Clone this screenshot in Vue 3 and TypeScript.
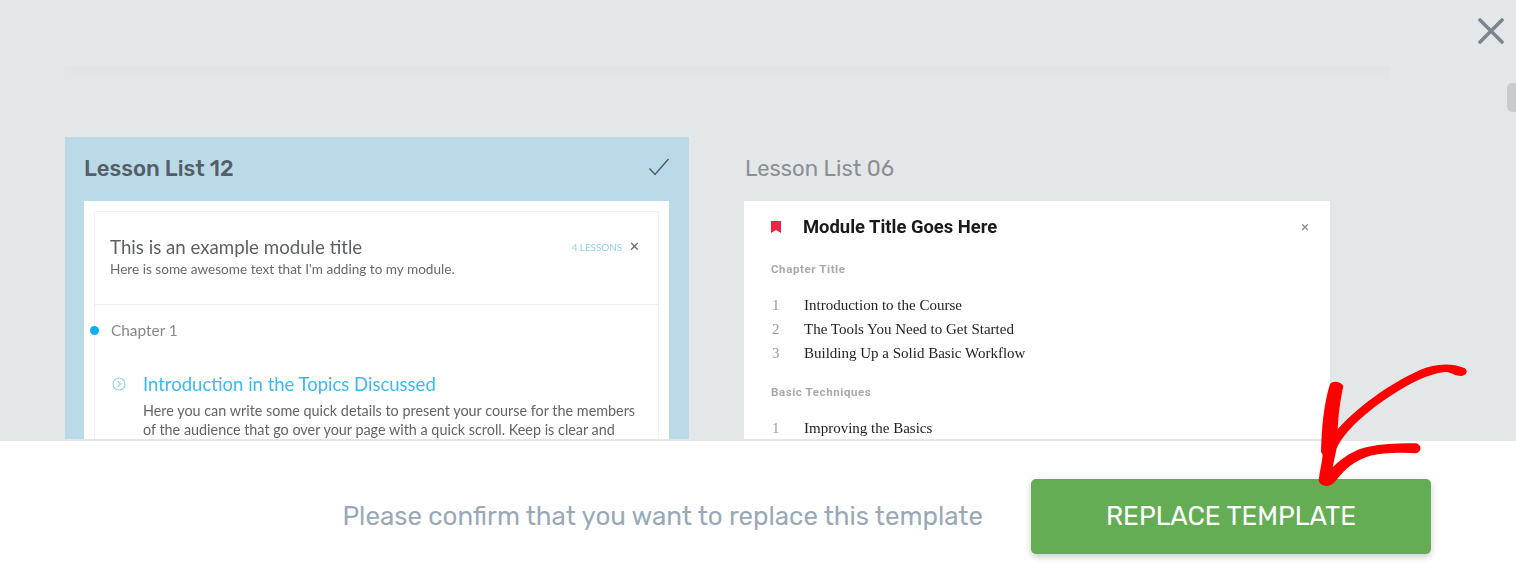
<script setup lang="ts">
const chapters = [
  { title: 'Chapter Title', lessons: ['Introduction to the Course', 'The Tools You Need to Get Started', 'Building Up a Solid Basic Workflow'] },
  { title: 'Basic Techniques', lessons: ['Improving the Basics'] },
]
</script>

<template>
  <div class="page">
    <main class="stage">
      <div class="rule"></div>
      <section class="cards">
        <article class="card selected">
          <header class="card-head">
            <h2 class="card-title strong">Lesson List 12</h2>
            <svg class="check" viewBox="0 0 22 18" width="22" height="18" aria-hidden="true">
              <path d="M1.5 10.5 L7 16.5 L20.5 1" fill="none" stroke="#4f5a63" stroke-width="1.4" />
            </svg>
          </header>
          <div class="preview soft">
            <div class="module">
              <div class="module-head">
                <div>
                  <div class="module-title">This is an example module title</div>
                  <div class="module-sub">Here is some awesome text that I'm adding to my module.</div>
                </div>
                <div class="module-meta">
                  <span class="lessons">4 LESSONS</span>
                  <span class="module-x">✕</span>
                </div>
              </div>
              <div class="chapter"><span class="dot"></span>Chapter 1</div>
              <div class="lesson">
                <svg class="lesson-icon" viewBox="0 0 14 14" width="14" height="14" aria-hidden="true">
                  <circle cx="7" cy="7" r="6" fill="none" stroke="#8fd5f3" stroke-width="1.1" />
                  <path d="M5.6 4 L8.6 7 L5.6 10" fill="none" stroke="#8fd5f3" stroke-width="1.1" />
                </svg>
                <div>
                  <div class="lesson-title">Introduction in the Topics Discussed</div>
                  <p class="lesson-text">Here you can write some quick details to present your course for the members of the audience that go over your page with a quick scroll. Keep is clear and</p>
                </div>
              </div>
            </div>
          </div>
        </article>
        <article class="card">
          <header class="card-head">
            <h2 class="card-title">Lesson List 06</h2>
          </header>
          <div class="preview soft plain">
            <div class="plain-head">
              <svg class="bookmark" viewBox="0 0 10 12" width="10" height="12" aria-hidden="true">
                <path d="M0 0 H10 V12 L5 9 L0 12 Z" fill="#ee2245" />
              </svg>
              <span class="plain-title">Module Title Goes Here</span>
              <span class="plain-x">×</span>
            </div>
            <div v-for="c in chapters" :key="c.title" class="plain-chapter">
              <div class="plain-label">{{ c.title }}</div>
              <ol class="plain-list">
                <li v-for="(l, i) in c.lessons" :key="l"><span class="num">{{ i + 1 }}</span>{{ l }}</li>
              </ol>
            </div>
          </div>
        </article>
      </section>
    </main>
    <footer class="foot">
      <span class="confirm">Please confirm that you want to replace this template</span>
      <button class="replace" type="button">REPLACE TEMPLATE</button>
    </footer>

    <svg class="close" viewBox="0 0 26 26" width="26" height="26" aria-hidden="true">
      <path d="M2 2 L24 24 M24 2 L2 24" stroke="#7d858e" stroke-width="3.6" stroke-linecap="round" />
    </svg>
    <div class="thumb"></div>
    <svg class="arrow" viewBox="0 0 708 705" width="236" height="235" aria-hidden="true">
      <path fill="#ff0000" d="M150 132 C158 122 180 122 190 138 C184 170 176 205 173 268 C230 205 320 135 420 90 C460 72 510 66 553 84 C566 92 560 106 544 108 C525 108 515 98 500 96 C440 98 350 150 270 212 C220 252 185 290 170 325 L158 382 C190 350 225 328 265 320 C310 311 365 309 408 310 C426 314 426 336 408 340 C365 337 305 338 262 350 C225 362 195 385 165 425 C150 442 125 442 116 424 C118 395 126 370 128 345 L123 335 C125 270 130 195 150 132 Z" />
    </svg>
  </div>
</template>

<style>
html, body { margin: 0; background: #fff; }
</style>

<style scoped>
.page {
  position: relative;
  width: 1516px;
  height: 575px;
  overflow: hidden;
  background: #fff;
  font-family: Roboto, "Liberation Sans", sans-serif;
}
.stage {
  height: 439px;
  overflow: hidden;
  box-sizing: border-box;
  padding-top: 67px;
  background: #e3e7e8;
}
.rule {
  height: 16px;
  margin: 0 126px 0 65px;
  background: linear-gradient(#e0e4e5, #e3e7e8);
}
.cards {
  display: grid;
  grid-template-columns: 624px 624px;
  column-gap: 36px;
  margin: 54px 0 0 65px;
}
.card {
  box-sizing: border-box;
  padding: 0 19px;
  height: 400px;
}
.card.selected { background: #badae8; }
.card-head {
  display: flex;
  align-items: center;
  justify-content: space-between;
  height: 64px;
  padding-bottom: 1px;
  box-sizing: border-box;
}
.card-title {
  margin: 0 0 0 1px;
  font-family: Rubik, Roboto, sans-serif;
  font-size: 22.1px;
  font-weight: 400;
  color: #8a8f93;
}
.card-title.strong { margin-left: 0; font-weight: 500; color: #555e67; }
.check { margin-top: -4px; }
.preview {
  width: 586px;
  height: 336px;
  background: #fff;
  box-sizing: border-box;
}
.soft { filter: blur(0.3px); }
.selected .preview { width: 585px; padding: 10px 10px 0 10px; }
.module {
  border: 1.5px solid #eff1f2;
  height: 400px;
  font-family: Lato, sans-serif;
}
.module-head {
  display: flex;
  justify-content: space-between;
  height: 93px;
  box-sizing: border-box;
  padding: 24px 18px 0 15px;
  border-bottom: 1.5px solid #eaeced;
}
.module-title { font-size: 18.7px; line-height: 22px; color: #5c5f62; }
.module-sub { font-size: 13.6px; line-height: 22px; color: #666a6d; }
.module-meta { display: flex; gap: 7px; align-items: flex-start; line-height: 22px; }
.lessons { font-size: 10px; letter-spacing: -0.1px; color: #8cd0ee; }
.module-x { font-size: 13px; color: #666; line-height: 20px; }
.chapter {
  position: relative;
  padding: 14px 0 0 16px;
  font-size: 15.4px;
  line-height: 22px;
  color: #86898c;
}
.dot {
  position: absolute;
  left: -5px;
  top: 21px;
  width: 9px;
  height: 9px;
  border-radius: 50%;
  background: #0eaef0;
}
.lesson {
  display: flex;
  gap: 17px;
  padding: 31px 17px 0 17px;
  align-items: flex-start;
}
.lesson-icon { flex: none; margin-top: 5px; }
.lesson-title { font-size: 18.5px; line-height: 24px; color: #3db9ef; }
.lesson-text { margin: 5px 0 0; font-size: 14.38px; line-height: 19px; color: #626568; }
.plain { padding: 0 21px 0 27px; }
.plain-head {
  display: flex;
  align-items: center;
  height: 51px;
}
.bookmark { flex: none; margin-right: 22px; }
.plain-title {
  flex: 1;
  font-weight: 700;
  font-size: 18.4px;
  color: #17191b;
}
.plain-x { font-size: 15px; color: #8c8c8c; }
.plain-label {
  font-weight: 700;
  font-size: 11.5px;
  letter-spacing: 0.6px;
  line-height: 16px;
  color: #a8a8a8;
}
.plain-chapter { padding-top: 9px; }
.plain-chapter + .plain-chapter { padding-top: 19px; }
.plain-list {
  list-style: none;
  margin: 16px 0 0;
  padding: 0;
  font-family: "Liberation Serif", serif;
  font-size: 15px;
  line-height: 24px;
  color: #232323;
}
.num { display: inline-block; width: 33px; padding-left: 1px; box-sizing: border-box; color: #a0a0a0; }
.foot {
  box-sizing: border-box;
  height: 136px;
  border-top: 2px solid #e3e7e8;
  display: flex;
  justify-content: flex-end;
  align-items: flex-start;
  gap: 48px;
  padding: 38px 85px 0 0;
}
.confirm {
  font-family: Rubik, Roboto, sans-serif;
  font-size: 25.9px;
  line-height: 75px;
  color: #9aa9b8;
}
.replace {
  width: 400px;
  height: 75px;
  border: 0;
  border-radius: 5px;
  background: #65ad55;
  color: #fff;
  font-family: Rubik, Roboto, sans-serif;
  font-size: 26.1px;
  box-shadow: 0 3px 7px rgba(0, 0, 0, 0.2);
}
.close { position: absolute; left: 1478px; top: 18px; }
.thumb {
  position: absolute;
  left: 1507px;
  top: 83px;
  width: 12px;
  height: 29px;
  border-radius: 5px;
  background: #c9cccd;
}
.arrow { position: absolute; left: 1280px; top: 340px; }
</style>
